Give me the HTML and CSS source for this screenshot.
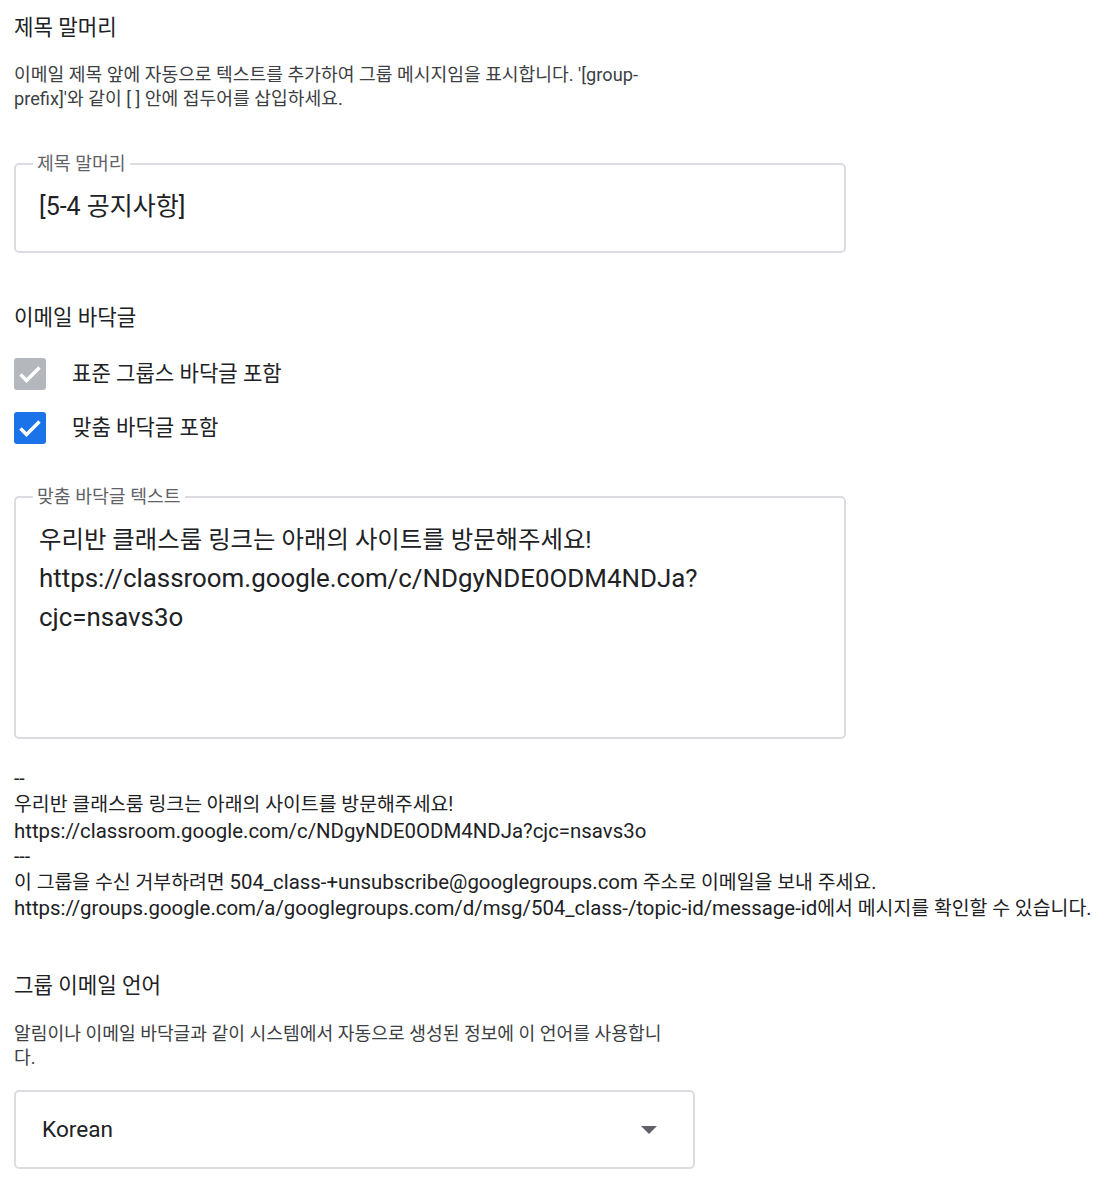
FILE: index.html
```html
<!DOCTYPE html>
<html>
	<head>
		<meta charset="UTF-8">
		<title>그룹 설정</title>
		<link rel="stylesheet" href="styles.css">
	</head>
	<body>
		<div class="page">
			<h2 class="title">제목 말머리</h2>
			<p class="desc">이메일 제목 앞에 자동으로 텍스트를 추가하여 그룹 메시지임을 표시합니다. '[group-prefix]'와 같이 [ ] 안에 접두어를 삽입하세요.</p>
			<div class="field field-prefix">
				<span class="field-label">제목 말머리</span>
				<div class="field-value">[5-4 공지사항]</div>
			</div>

			<h2 class="title title-footer">이메일 바닥글</h2>
			<ul class="checks">
				<li>
					<span class="cb cb-disabled">
						<svg width="32" height="32" viewBox="0 0 32 32"><path d="M6.5 16.5l6 6 13-13" fill="none" stroke="#fff" stroke-width="3.4"/></svg>
					</span>
					<span class="cb-label">표준 그룹스 바닥글 포함</span>
				</li>
				<li>
					<span class="cb cb-on">
						<svg width="32" height="32" viewBox="0 0 32 32"><path d="M6.5 16.5l6 6 13-13" fill="none" stroke="#fff" stroke-width="3.4"/></svg>
					</span>
					<span class="cb-label">맞춤 바닥글 포함</span>
				</li>
			</ul>
			<div class="field field-footer">
				<span class="field-label">맞춤 바닥글 텍스트</span>
				<div class="field-value area">우리반 클래스룸 링크는 아래의 사이트를 방문해주세요!<br><span class="lt">https://classroom.google.com/c/NDgyNDE0ODM4NDJa?<br>cjc=nsavs3o</span></div>
			</div>

			<div class="preview">
				<div>--</div>
				<div>우리반 클래스룸 링크는 아래의 사이트를 방문해주세요!</div>
				<div class="lt">https://classroom.google.com/c/NDgyNDE0ODM4NDJa?cjc=nsavs3o</div>
				<div>---</div>
				<div>이 그룹을 수신 거부하려면 <span class="lt">504_class-+unsubscribe@googlegroups.com</span> 주소로 이메일을 보내 주세요.</div>
				<div><span class="lt">https://groups.google.com/a/googlegroups.com/d/msg/504_class-/topic-id/message-id</span>에서 메시지를 확인할 수 있습니다.</div>
			</div>

			<h2 class="title title-lang">그룹 이메일 언어</h2>
			<p class="desc desc-lang">알림이나 이메일 바닥글과 같이 시스템에서 자동으로 생성된 정보에 이 언어를 사용합니다.</p>
			<div class="select">
				<span>Korean</span>
				<span class="arrow"></span>
			</div>
		</div>
	</body>
</html>
```

FILE: styles.css
```css
* {margin: 0; padding: 0; box-sizing: border-box;}
ul, li {list-style: none;}
body {
	background: #fff;
	color: #202124;
	font-family: Roboto, "Noto Sans CJK KR", sans-serif;
}
.page {
	padding: 14px 0 40px 14px;
}
.title {
	font-size: 21.2px;
	font-weight: 400;
	line-height: 28px;
}
.desc {
	margin-top: 21px;
	max-width: 650px;
	font-size: 18.2px;
	line-height: 24px;
	color: #3c4043;
}
.field {
	position: relative;
	width: 832px;
	margin-top: 52px;
	border: 2px solid #dadce0;
	border-radius: 5px;
}
.field-label {
	position: absolute;
	left: 17px;
	top: -12px;
	padding: 0 4px;
	background: #fff;
	font-size: 18.3px;
	line-height: 22px;
	color: #5f6368;
}
.field-value {
	padding: 26px 23px 28px;
	font-size: 25px;
	line-height: 32px;
}
.field-footer {
	margin-top: 52px;
	height: 243px;
}
.area {
	padding-top: 23px;
	font-size: 24.4px;
	line-height: 38px;
}
.area .lt {
	font-size: 25.9px;
	line-height: 38px;
}
.title-footer {
	margin-top: 51px;
}
.checks {
	margin-top: 26px;
}
.checks li {
	display: flex;
	align-items: center;
	gap: 26px;
	height: 32px;
	margin-bottom: 22px;
}
.checks li:last-child {
	margin-bottom: 0;
}
.cb {
	width: 32px;
	height: 32px;
	border-radius: 3px;
	display: block;
}
.cb svg {
	display: block;
}
.cb-disabled {
	background: #b4b7bb;
}
.cb-on {
	background: #1a73e8;
}
.cb-label {
	font-size: 21.1px;
	line-height: 28px;
	color: #202124;
}
.preview {
	margin-top: 27px;
	font-size: 19.4px;
	line-height: 26px;
	white-space: nowrap;
}
.preview div {
	height: 26px;
}
.preview .lt {
	font-size: 20.4px;
}
.preview span.lt {
	line-height: 20px;
}
.title-lang {
	margin-top: 50px;
}
.desc-lang {
	margin-top: 22px;
}
.select {
	display: flex;
	align-items: center;
	justify-content: space-between;
	width: 681px;
	height: 79px;
	margin-top: 20px;
	padding: 0 36px 0 26px;
	border: 2px solid #dadce0;
	border-radius: 5px;
	font-size: 22.6px;
}
.arrow {
	width: 0;
	height: 0;
	border-left: 8px solid transparent;
	border-right: 8px solid transparent;
	border-top: 8px solid #5f6368;
}
```
